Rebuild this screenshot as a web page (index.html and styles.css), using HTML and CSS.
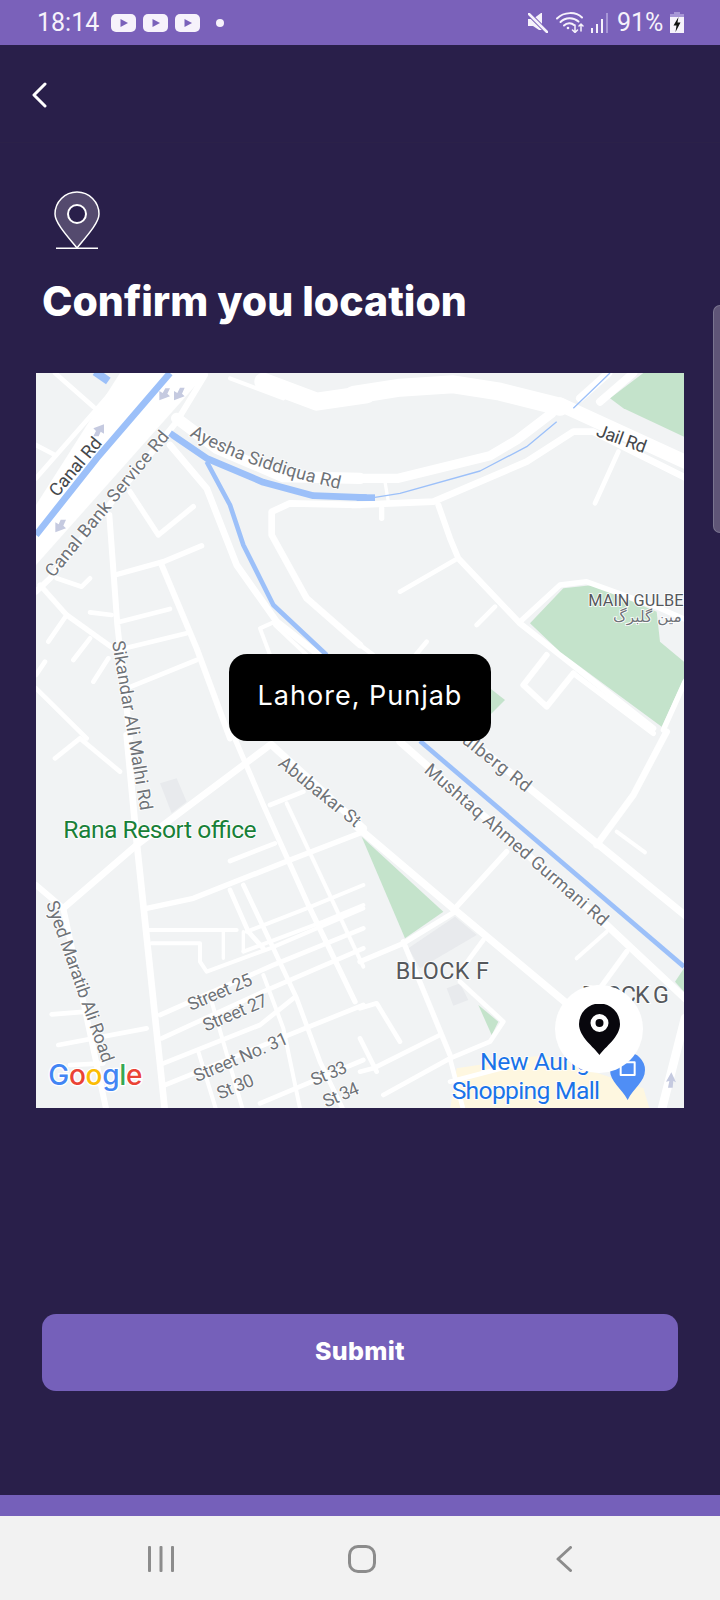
FILE: index.html
```html
<!DOCTYPE html>
<html lang="en">

<head>
    <meta charset="UTF-8">
    <meta name="viewport" content="width=device-width, initial-scale=1.0">
    <title>Confirm location</title>
    <link rel="stylesheet" href="styles.css">
</head>

<body>
    <div class="screen">
        <div class="status-bar">
            <span class="status-time">18:14</span>
            <div class="status-apps">
                <svg class="yt-icon" viewBox="0 0 25 18"><rect width="25" height="18" rx="5" fill="#f6f2fb"/><path d="M9.500 5l7.500 4-7.500 4z" fill="#7a61ba"/></svg>
                <svg class="yt-icon" viewBox="0 0 25 18"><rect width="25" height="18" rx="5" fill="#f6f2fb"/><path d="M9.500 5l7.500 4-7.500 4z" fill="#7a61ba"/></svg>
                <svg class="yt-icon" viewBox="0 0 25 18"><rect width="25" height="18" rx="5" fill="#f6f2fb"/><path d="M9.500 5l7.500 4-7.500 4z" fill="#7a61ba"/></svg>
            </div>
            <span class="status-dot"></span>
            <div class="status-right">
                <svg class="mute-icon" viewBox="0 0 20 20"><path d="M0 6h5l8-6h1v17H11L5 13H0z" fill="#f6f2fb"/><path d="M0 0l20 20" stroke="#7a61ba" stroke-width="4.500"/><path d="M1 1l18 18" stroke="#f6f2fb" stroke-width="2.500" stroke-linecap="round"/></svg>
                <svg class="wifi-icon" viewBox="0 0 28 21" fill="none" stroke="#f6f2fb" stroke-linecap="round">
                    <path d="M1 6.500C8 -0.500 20 -0.500 26 5.500" stroke-width="2"/>
                    <path d="M4.500 10C9.500 5 17.500 5 22.500 9.500" stroke-width="2"/>
                    <path d="M8 13.500C11 10.500 15.500 10.500 18 13" stroke-width="2"/>
                    <circle cx="12" cy="16" r="1.300" fill="#f6f2fb" stroke="none"/>
                    <path d="M19 13v7M16.500 18l2.500 2.500 2.500-2.500" stroke-width="1.500"/>
                    <path d="M25 19v-7M23 14l2-2 2 2" stroke-width="1.500"/>
                </svg>
                <svg class="signal-icon" viewBox="0 0 18 20">
                    <rect x="1" y="15" width="2" height="5" fill="#f6f2fb"/>
                    <rect x="6" y="11" width="2" height="9" fill="#f6f2fb"/>
                    <rect x="11" y="6" width="2" height="14" fill="#f6f2fb"/>
                    <rect x="16" y="0" width="2" height="20" fill="#a796d6"/>
                </svg>
                <span class="status-battery-text">91%</span>
                <svg class="battery-icon" viewBox="0 0 14 21">
                    <path d="M4 0h6v2h4v5H0V2h4z" fill="#a796d6"/>
                    <rect y="5" width="14" height="16" fill="#f6f2fb"/>
                    <path d="M8.500 5L3.500 13.500H6.500L5.500 20 10.500 10.500H7.500z" fill="#111"/>
                </svg>
            </div>
        </div>

        <div class="top-bar">
            <svg class="back-icon" viewBox="0 0 16 26" fill="none" stroke="#fff" stroke-width="3" stroke-linecap="round" stroke-linejoin="round"><path d="M14 2L3 13l11 11"/></svg>
        </div>

        <div class="content">
            <svg class="pin-icon" viewBox="0 0 46 58">
                <path d="M23 57C14 46 1 32 1 23a22 22 0 0 1 44 0C45 32 32 46 23 57z" fill="#544a6e" stroke="#fff" stroke-width="1.500"/>
                <circle cx="23" cy="23" r="9" fill="#291f4a" stroke="#fff" stroke-width="2"/>
                <path d="M2 57.300h42" stroke="#fff" stroke-width="1.500"/>
            </svg>
            <h1 class="title">Confirm you location</h1>

            <div class="map">
                <svg class="map-canvas" viewBox="0 0 1944 2205">
                    <rect width="1944" height="2205" fill="#f1f3f4"/>

                    <!-- top left -->
                    <g transform="translate(-18,-24)" fill="none" stroke="#fff" stroke-linecap="round" stroke-linejoin="round">
                        <path d="M18 420L270 24H530L18 600z" fill="#fff" stroke="none"/>
                        <path d="M195 20L235 48" stroke="#9cc0f9" stroke-width="24" stroke-linecap="butt"/>
                        <path d="M18 510L200 280 420 24" stroke="#9cc0f9" stroke-width="20" stroke-linecap="butt"/>
                        <path d="M75 24L190 125M18 240L75 270M18 340L295 24" stroke-width="14"/>
                        <path d="M18 680L60 640 440 170 525 30" stroke-width="18"/>
                        <path d="M440 160L560 250 760 335 990 340" stroke-width="34"/>
                        <path d="M420 240L530 370 620 600 740 770 880 880" stroke-width="20"/>
                        <path d="M700 50L860 110 1010 88" stroke-width="54"/>
                        <path d="M600 40L760 100" stroke-width="12"/>
                        <path d="M300 380L385 510 490 425" stroke-width="16"/>
                        <path d="M238 450L262 780 300 1120" stroke-width="18"/>
                        <path d="M255 630L400 590 515 542" stroke-width="16"/>
                        <path d="M395 600L500 850 600 1120" stroke-width="18"/>
                        <path d="M180 742L245 750M270 770L420 732M285 850L470 805M290 970L500 885" stroke-width="14"/>
                        <path d="M30 660L110 750 250 850" stroke-width="16"/>
                        <path d="M110 750L55 830M180 820L130 885M235 880L190 950M80 640L155 665 180 640M18 930L45 890" stroke-width="14"/>
                        <path d="M18 970L170 1120" stroke-width="14"/>
                        <path d="M990 420L780 415 725 440 725 510 830 700 990 840" stroke-width="20"/>
                        <path d="M690 790L735 770M690 790L720 870M735 780L830 870" stroke-width="12"/>
                        <path d="M530 290L600 420 640 540 730 720 890 870" stroke="#9cc0f9" stroke-width="14" stroke-linecap="butt"/>
                        <path d="M420 205L530 280 700 352 850 392 1010 398" stroke="#9cc0f9" stroke-width="20" stroke-linecap="butt"/>
                        <g class="arrows" fill="#c5cae0" stroke="none">
                            <path d="M222 178L190 190 198 198 190 214 206 214 212 200 222 206z"/>
                            <path d="M388 106L420 94 412 86 420 70 406 70 398 84 388 78z"/>
                            <path d="M432 106L464 94 456 86 464 68 450 68 442 84 432 78z"/>
                            <path d="M76 502L108 490 100 482 108 464 92 464 86 478 76 472z"/>
                        </g>
                    </g>

                    <!-- top right -->
                    <g transform="translate(972,-24)" fill="none" stroke="#fff" stroke-linecap="round" stroke-linejoin="round">
                        <path d="M750 100L850 24H972V215L790 130z" fill="#c4e3cb" stroke="none"/>
                        <path d="M-20 90L120 68 280 58 420 80 600 125" stroke-width="54"/>
                        <path d="M600 118L980 292" stroke-width="42"/>
                        <path d="M-20 340L115 340 390 272 470 225 575 145" stroke-width="28"/>
                        <path d="M-20 420L220 410 500 290 640 200 700 200 980 340" stroke-width="20"/>
                        <path d="M660 100L745 24M720 110L820 24" stroke-width="24"/>
                        <path d="M65 430V460" stroke-width="16"/>
                        <path d="M75 350L85 410" stroke-width="10"/>
                        <path d="M235 420L270 520 295 580 480 775 880 1090" stroke-width="18"/>
                        <path d="M285 585L120 680M405 725L350 780M775 260L705 415" stroke-width="14"/>
                        <path d="M510 775L610 670 700 660 890 740 900 830 972 890V940L905 1085 600 860z" fill="#c4e3cb" stroke="none"/>
                        <path d="M480 770L600 660 680 650 900 730 980 765" stroke-width="16"/>
                        <path d="M560 870L490 960 560 1025 640 925" stroke-width="18"/>
                        <path d="M640 925L880 1105M975 950L910 1095" stroke-width="16"/>
                        <path d="M200 830L150 890M0 840L40 870" stroke-width="14"/>
                        <path d="M390 970L435 1005 390 1050z" fill="#c4e3cb" stroke="none"/>
                        <path d="M40 398L120 385 360 318 500 245 590 170M640 130L750 24" stroke="#9cc0f9" stroke-width="4" stroke-linecap="butt"/>
                        <path d="M-10 398H45" stroke="#9cc0f9" stroke-width="20" stroke-linecap="butt"/>
                    </g>

                    <!-- bottom left -->
                    <g transform="translate(-18,1086)" fill="none" stroke="#fff" stroke-linecap="round" stroke-linejoin="round">
                        <path d="M390 145L440 130 470 200 425 235z" fill="#e8eaed" stroke="none"/>
                        <path d="M150 10L75 70M150 10L270 110" stroke-width="14"/>
                        <path d="M290 0L320 320 405 1130" stroke-width="20"/>
                        <path d="M100 520L320 330 720 30" stroke-width="20"/>
                        <path d="M610 0L700 210 835 510 975 800" stroke-width="16"/>
                        <path d="M725 30L1000 280" stroke-width="22"/>
                        <path d="M720 210L820 170M600 378L735 325" stroke-width="14"/>
                        <path d="M770 205L1000 695" stroke-width="12"/>
                        <path d="M350 520L490 490 780 375 1000 290" stroke-width="16"/>
                        <path d="M18 450L100 520 160 800 230 1130" stroke-width="18"/>
                        <path d="M350 585H620M365 625H510V680L530 710 720 640 1000 520" stroke-width="12"/>
                        <path d="M650 590L830 520 1000 450M640 650L880 560 1000 510" stroke-width="12"/>
                        <path d="M600 465L655 590 700 640M640 450L730 640 800 790 870 980 940 1125" stroke-width="14"/>
                        <path d="M580 590V670M640 590V650" stroke-width="10"/>
                        <path d="M390 840L730 690 1000 580M395 910L700 770 1000 640M400 985L690 870 790 790M405 1050L850 870 1000 810M690 1105L1000 975" stroke-width="14"/>
                        <path d="M700 720L760 880 810 1120M505 950L560 1130M545 800L640 1130" stroke-width="12"/>
                        <path d="M65 838L170 830M85 930L350 880M120 990L220 985" stroke-width="14"/>
                    </g>

                    <!-- bottom right -->
                    <g transform="translate(972,1086)" fill="none" stroke="#fff" stroke-linecap="round" stroke-linejoin="round">
                        <path d="M290 1000L550 960 850 1060 870 1125H270z" fill="#fef7e0" stroke="none"/>
                        <path d="M5 305L250 530 135 610z" fill="#c4e3cb" stroke="none"/>
                        <path d="M355 810L415 860 395 900z" fill="#c4e3cb" stroke="none"/>
                        <path d="M945 740L972 700V770z" fill="#c4e3cb" stroke="none"/>
                        <path d="M145 640L285 545 350 600 180 700z" fill="#e8eaed" stroke="none"/>
                        <path d="M260 760L300 745 325 795 280 812z" fill="#e8eaed" stroke="none"/>
                        <path d="M300 -10L980 545" stroke-width="22"/>
                        <path d="M120 20L740 570 980 795" stroke-width="22"/>
                        <path d="M710 330L820 180 920 -10" stroke-width="20"/>
                        <path d="M770 290L855 352M650 670L740 590" stroke-width="12"/>
                        <path d="M285 520L440 350" stroke-width="16"/>
                        <path d="M-10 275L285 525 620 805" stroke-width="22"/>
                        <path d="M0 680L130 625 285 530M130 620L270 960" stroke-width="16"/>
                        <path d="M300 710L370 615M300 740L430 860 390 920 270 970" stroke-width="14"/>
                        <path d="M800 650L720 760" stroke-width="16"/>
                        <path d="M0 820L50 805 120 920M0 910L50 1010M40 1000L240 900M70 1080L270 970M0 1010L40 1000" stroke-width="14"/>
                        <path d="M270 970L310 1125M270 1040L500 980" stroke-width="14"/>
                        <path d="M975 850L905 1125" stroke-width="26"/>
                        <path d="M180 18L972 695" stroke="#9cc0f9" stroke-width="14" stroke-linecap="butt"/>
                        <path d="M934 1012L918 1040 928 1038 924 1058 938 1058 940 1038 948 1042z" fill="#c5cae0" stroke="none"/>
                        <path d="M803 1095C785 1060 750 1040 750 1005a52 52 0 0 1 105 0C855 1040 820 1060 803 1095z" fill="#4f8ef5" stroke="none"/>
                        <rect x="782" y="982" width="42" height="38" fill="none" stroke="#fff" stroke-width="6" stroke-linecap="butt"/>
                    </g>

                    <!-- labels -->
                    <g class="map-labels">
                        <g transform="translate(-18,-24)">
                            <text transform="translate(82,398) rotate(-50)" textLength="212" class="label-dark">Canal Rd</text>
                            <text transform="translate(70,640) rotate(-50.500)" textLength="550">Canal Bank Service Rd</text>
                            <path id="ayesha-road" d="M478 212Q650 310 930 372" fill="none"/>
                            <text textLength="480"><textPath href="#ayesha-road">Ayesha Siddiqua Rd</textPath></text>
                            <text transform="translate(246,830) rotate(80.500)" textLength="515">Sikandar Ali Malhi Rd</text>
                        </g>
                        <g transform="translate(972,-24)">
                            <text transform="translate(706,212) rotate(20)" textLength="155" class="label-dark">Jail Rd</text>
                            <text x="685" y="722" class="label-block-small">MAIN GULBERG</text>
                            <text x="965" y="772" class="label-urdu" direction="rtl">مین گلبرگ</text>
                        </g>
                        <g transform="translate(-18,1086)">
                            <text transform="translate(742,90) rotate(39)" textLength="300">Abubakar St</text>
                            <text transform="translate(48,505) rotate(70.500)" textLength="510">Syed Maratib Ali Road</text>
                            <text x="100" y="310" class="label-green" textLength="580">Rana Resort office</text>
                            <text transform="translate(482,828) rotate(-23)" textLength="205">Street 25</text>
                            <text transform="translate(528,890) rotate(-23)" textLength="205">Street 27</text>
                            <text transform="translate(500,1042) rotate(-23)" textLength="302">Street No. 31</text>
                            <text transform="translate(570,1094) rotate(-23)" textLength="115">St 30</text>
                            <text transform="translate(852,1054) rotate(-23)" textLength="112">St 33</text>
                            <text transform="translate(888,1118) rotate(-23)" textLength="112">St 34</text>
                            <text x="55" y="1050" class="google-logo"><tspan fill="#4285f4">G</tspan><tspan fill="#ea4335">o</tspan><tspan fill="#fbbc05">o</tspan><tspan fill="#4285f4">g</tspan><tspan fill="#34a853">l</tspan><tspan fill="#ea4335">e</tspan></text>
                        </g>
                        <g transform="translate(972,1086)">
                            <text transform="translate(272,-2) rotate(38)" textLength="285">Gulberg Rd</text>
                            <text transform="translate(190,110) rotate(41)" textLength="710">Mushtaq Ahmed Gurmani Rd</text>
                            <text x="107" y="733" class="label-block" textLength="280">BLOCK F</text>
                            <text x="665" y="805" class="label-block" textLength="262">BLOCK G</text>
                            <text x="360" y="1005" class="label-blue" textLength="330">New Aurig</text>
                            <text x="275" y="1092" class="label-blue" textLength="445">Shopping Mall</text>
                        </g>
                    </g>
                </svg>

                <div class="map-tooltip">Lahore, Punjab</div>

                <div class="map-marker">
                    <svg viewBox="0 0 41 51"><path d="M20.500 51C15 43 0 33 0 20a20.500 20.500 0 0 1 41 0C41 33 26 43 20.500 51z" fill="#08070d"/><circle cx="20.500" cy="19" r="6.500" fill="none" stroke="#fff" stroke-width="5"/></svg>
                </div>
            </div>

            <button class="submit-btn">Submit</button>
        </div>

        <div class="scroll-thumb"></div>

        <div class="bottom-band"></div>
        <div class="nav-bar">
            <svg class="nav-recents" viewBox="0 0 26 26" fill="#8c8c8c"><rect width="3" height="26" rx="1"/><rect x="11.500" width="3" height="26" rx="1"/><rect x="23" width="3" height="26" rx="1"/></svg>
            <svg class="nav-home" viewBox="0 0 28 28" fill="none" stroke="#8c8c8c" stroke-width="3"><rect x="1.500" y="1.500" width="25" height="25" rx="8.500"/></svg>
            <svg class="nav-back" viewBox="0 0 16 26" fill="none" stroke="#8c8c8c" stroke-width="3" stroke-linecap="round" stroke-linejoin="round"><path d="M14.500 1.500L2 13l12.500 11.500"/></svg>
        </div>
    </div>
</body>

</html>
```

FILE: styles.css
```css
* {
    box-sizing: border-box;
}

body {
    margin: 0;
    background-color: #291f4a;
    font-family: "Inter", "Liberation Sans", sans-serif;
}

.screen {
    position: relative;
    width: 720px;
    height: 1600px;
    display: flex;
    flex-direction: column;
    overflow: hidden;
    background-color: #291f4a;
}

/* status bar */
.status-bar {
    height: 45px;
    flex-shrink: 0;
    display: flex;
    align-items: center;
    padding-left: 37px;
    padding-right: 36px;
    background-color: #7a61ba;
    color: #f6f2fb;
    font-family: "Roboto", sans-serif;
}

.status-time {
    font-size: 25px;
    width: 74px;
}

.status-apps {
    display: flex;
    gap: 7px;
}

.yt-icon {
    width: 25px;
    height: 18px;
}

.status-dot {
    width: 8px;
    height: 8px;
    margin-left: 16px;
    border-radius: 50%;
    background-color: #f6f2fb;
}

.status-right {
    margin-left: auto;
    display: flex;
    align-items: center;
}

.mute-icon {
    width: 20px;
    height: 20px;
    margin-right: 8px;
}

.wifi-icon {
    width: 28px;
    height: 21px;
    margin-right: 6px;
}

.signal-icon {
    width: 18px;
    height: 20px;
    margin-right: 9px;
}

.status-battery-text {
    font-size: 25px;
    width: 53px;
}

.battery-icon {
    width: 14px;
    height: 21px;
}

/* header */
.top-bar {
    height: 98px;
    flex-shrink: 0;
    display: flex;
    align-items: center;
    padding-left: 31px;
    padding-top: 2px;
    border-bottom: 1px solid #2b2149;
}

.back-icon {
    width: 16px;
    height: 26px;
}

/* page body */
.content {
    padding: 0 36px;
    display: flex;
    flex-direction: column;
}

.pin-icon {
    width: 46px;
    height: 58px;
    margin-top: 48px;
    margin-left: 18px;
}

.title {
    margin: 27px 0 47px 6px;
    height: 50px;
    font-size: 41px;
    line-height: 50px;
    font-weight: 800;
    color: #fff;
}

.map {
    position: relative;
    width: 648px;
    height: 735px;
    background-color: #f1f3f4;
}

.map-canvas {
    display: block;
    width: 648px;
    height: 735px;
}

.map-labels text {
    font-family: "Roboto", sans-serif;
    font-size: 54px;
    fill: #6f7378;
    stroke: #fff;
    stroke-width: 5px;
    paint-order: stroke;
}

.map-labels .label-dark {
    fill: #44474a;
}

.map-labels .label-block {
    font-size: 70px;
    fill: #55585c;
}

.map-labels .label-block-small {
    font-size: 49px;
    fill: #55585c;
}

.map-labels .label-urdu {
    font-family: "DejaVu Sans", sans-serif;
    font-size: 46px;
    fill: #6f7378;
}

.map-labels .label-green {
    font-size: 74px;
    fill: #188038;
}

.map-labels .label-blue {
    font-size: 74px;
    fill: #1a73e8;
}

.map-labels .google-logo {
    font-family: "Inter", sans-serif;
    font-size: 84px;
    font-weight: 500;
    letter-spacing: -1px;
    stroke-width: 8px;
}

.map-tooltip {
    position: absolute;
    left: 193px;
    top: 281px;
    width: 262px;
    height: 87px;
    padding-bottom: 4px;
    display: flex;
    align-items: center;
    justify-content: center;
    border-radius: 18px;
    background-color: #000;
    color: #fff;
    font-size: 27px;
    letter-spacing: 1px;
}

.map-marker {
    position: absolute;
    left: 519px;
    top: 612px;
    width: 88px;
    height: 88px;
    display: flex;
    align-items: center;
    justify-content: center;
    border-radius: 50%;
    background-color: #fff;
}

.map-marker svg {
    width: 41px;
    height: 51px;
}

.submit-btn {
    width: 636px;
    height: 77px;
    margin: 206px 0 0 6px;
    padding-bottom: 4px;
    border: none;
    border-radius: 14px;
    background-color: #7560ba;
    color: #fff;
    font-family: "Inter", sans-serif;
    font-size: 25px;
    font-weight: 800;
    letter-spacing: 0.3px;
}

.scroll-thumb {
    position: absolute;
    right: 0;
    top: 305px;
    width: 7px;
    height: 228px;
    border: 1px solid #7a7590;
    border-right: none;
    border-radius: 7px 0 0 7px;
    background-color: #5f5577;
}

/* bottom */
.bottom-band {
    height: 21px;
    flex-shrink: 0;
    margin-top: auto;
    background-color: #7560ba;
}

.nav-bar {
    position: relative;
    height: 84px;
    flex-shrink: 0;
    background-color: #f2f2f2;
    display: flex;
    align-items: flex-start;
    padding-top: 30px;
}

.nav-recents {
    width: 26px;
    height: 26px;
    margin-left: 148px;
}

.nav-home {
    width: 28px;
    height: 28px;
    margin-left: 174px;
    margin-top: -1px;
}

.nav-back {
    width: 16px;
    height: 26px;
    margin-left: 180px;
}
```
